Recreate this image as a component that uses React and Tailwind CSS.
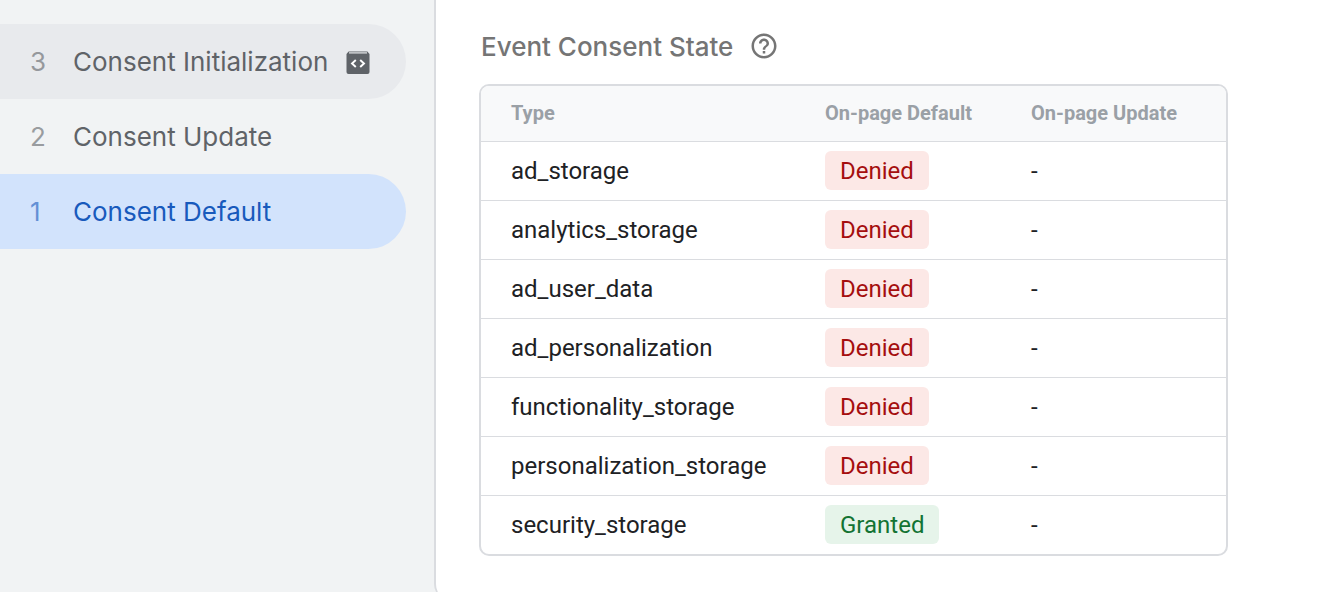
import { MdHelpOutline } from "react-icons/md";

const events = [
  { id: 3, name: "Consent Initialization", state: "hover", code: true },
  { id: 2, name: "Consent Update", state: "idle" },
  { id: 1, name: "Consent Default", state: "selected" },
];

const rowStyle = {
  hover: "bg-[#e8eaed] text-[#5f6368]",
  idle: "text-[#5f6368]",
  selected: "bg-[#d2e3fc] text-[#185abc]",
};

const consents = [
  ["ad_storage", "Denied"],
  ["analytics_storage", "Denied"],
  ["ad_user_data", "Denied"],
  ["ad_personalization", "Denied"],
  ["functionality_storage", "Denied"],
  ["personalization_storage", "Denied"],
  ["security_storage", "Granted"],
];

function CodeBoxIcon() {
  return (
    <svg viewBox="0 0 24 24" className="ml-[18px] mt-[3px] size-6 shrink-0" aria-hidden="true">
      <path d="M2.6 0.5h18.8L23.5 3v18a2 2 0 0 1-2 2h-19a2 2 0 0 1-2-2V3z" fill="#5f6368" />
      <path d="M3 1.9h18" stroke="#e8eaed" strokeWidth="1.2" />
      <path d="M9.8 9L6 12.5l3.8 3.5M14.2 9l3.8 3.5-3.8 3.5" fill="none" stroke="#fff" strokeWidth="1.9" />
    </svg>
  );
}

function Badge({ value }) {
  const tone = value === "Granted" ? "bg-[#e6f4ea] text-[#137333]" : "bg-[#fce8e6] text-[#a50e0e]";
  return <span className={`inline-flex h-[39px] items-center rounded-md px-[15px] align-middle ${tone}`}>{value}</span>;
}

export default function App() {
  return (
    <div className="flex min-h-screen overflow-hidden bg-[#f1f3f4] font-['Roboto',sans-serif]">
      <nav className="w-[434px] shrink-0 pt-6 pr-7" aria-label="Events">
        <ul>
          {events.map((e) => (
            <li key={e.id}>
              <button
                type="button"
                className={`flex h-[75px] w-full items-center rounded-r-full pl-[30px] text-left font-['Inter',sans-serif] text-[26px] ${rowStyle[e.state]}`}
              >
                <span className="w-[43px] shrink-0 opacity-60">{e.id}</span>
                <span className="whitespace-nowrap">{e.name}</span>
                {e.code && <CodeBoxIcon />}
              </button>
            </li>
          ))}
        </ul>
      </nav>
      <main className="-mb-2 min-w-0 grow rounded-bl-2xl border-l-2 border-[#dadce0] bg-white pt-6 pr-[98px] pb-11 pl-[43px]">
        <div className="mb-4 flex h-11 items-center gap-4 pl-[2px] text-[#757575]">
          <h1 className="font-['Inter',sans-serif] text-[26px] font-medium">Event Consent State</h1>
          <button type="button" aria-label="Help">
            <MdHelpOutline size={30} />
          </button>
        </div>
        <div className="overflow-hidden rounded-[10px] border-2 border-[#dadce0]">
          <table className="w-full table-fixed text-left text-2xl text-[#202124]">
            <colgroup>
              <col className="w-[314px]" />
              <col className="w-[206px]" />
              <col />
            </colgroup>
            <thead className="bg-[#f8f9fa] text-xl text-[#9aa0a6]">
              <tr className="h-[55px] border-b border-[#dadce0]">
                <th className="pl-[30px] font-bold">Type</th>
                <th className="pl-[30px] font-bold">On-page Default</th>
                <th className="pl-[30px] font-bold">On-page Update</th>
              </tr>
            </thead>
            <tbody>
              {consents.map(([type, value]) => (
                <tr key={type} className="h-[59px] border-b border-[#dadce0] last:border-b-0">
                  <td className="pl-[30px]">{type}</td>
                  <td className="pl-[30px]">
                    <Badge value={value} />
                  </td>
                  <td className="pl-[30px]">-</td>
                </tr>
              ))}
            </tbody>
          </table>
        </div>
      </main>
    </div>
  );
}
